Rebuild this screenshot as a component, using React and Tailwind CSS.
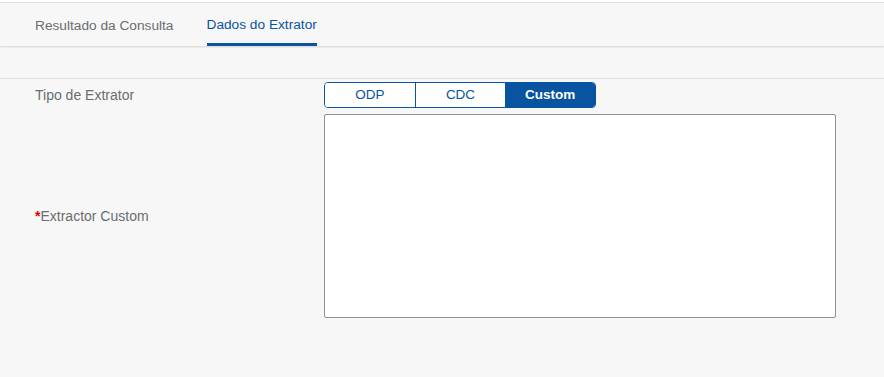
export default function App() {
  return (
    <div className="w-[884px] h-[377px] bg-[#f7f7f7] overflow-hidden" style={{ fontFamily: '"Liberation Sans", Arial, sans-serif' }}>
      <div className="h-[2px] bg-white" />
      <div className="h-[44px] border-t border-[#e0e0e0] bg-[#f7f7f7] shadow-[0_1px_2px_rgba(0,0,0,0.15)] flex items-stretch px-[35px] gap-[33px] relative z-10">
        <div className="flex items-center pt-[4px] text-[13.7px] text-[#6a6d70]">Resultado da Consulta</div>
        <div className="flex items-center pt-[4px] text-[13.7px] text-[#0854a0] border-b-[3px] border-[#0854a0]">Dados do Extrator</div>
      </div>
      <div className="h-[32px]" />
      <div className="border-t border-[#e0e0e0] pt-[3px]">
        <div className="flex">
          <div className="w-[324px] pl-[35px] pt-[3px] text-[14px] text-[#6a6d70]">Tipo de Extrator</div>
          <div className="flex h-[26px] w-[272px] rounded-[4px] border border-[#0854a0] overflow-hidden text-[13.5px]">
            <button className="flex-1 bg-white text-[#0854a0] border-r border-[#0854a0] pt-[1px]">ODP</button>
            <button className="flex-1 bg-white text-[#0854a0] pt-[1px]">CDC</button>
            <button className="flex-1 bg-[#0854a0] text-white font-bold pt-[1px]">Custom</button>
          </div>
        </div>
        <div className="flex mt-[6px]">
          <div className="w-[324px] pl-[35px] flex items-center text-[14px] text-[#6a6d70]">
            <span className="text-[#e00000] font-bold">*</span>Extractor Custom
          </div>
          <textarea className="w-[512px] h-[204px] bg-white border border-[#89919a] rounded-[2px] resize-none outline-none" />
        </div>
      </div>
    </div>
  );
}
